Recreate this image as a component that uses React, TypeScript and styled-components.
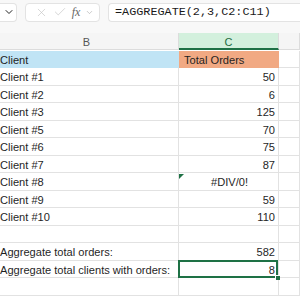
import React from 'react';
import styled, { createGlobalStyle } from 'styled-components';
import { ChevronDown, X, Check } from 'lucide-react';

const GlobalStyle = createGlobalStyle`
  body {
    margin: 0;
    font-family: "Liberation Sans", Arial, sans-serif;
    background: #ffffff;
  }
`;

const Frame = styled.div`
  width: 300px;
  height: 300px;
  overflow: hidden;
  background: #ffffff;
`;

const Toolbar = styled.div`
  display: flex;
  align-items: center;
  gap: 8px;
  height: 22px;
  padding-bottom: 11px;
  padding-top: 1px;
  background: #f8f8f8;
`;

const Box = styled.div`
  box-sizing: border-box;
  flex-shrink: 0;
  height: 19px;
  display: flex;
  align-items: center;
  background: #ffffff;
  border: 1px solid #e3e3e3;
  border-radius: 4px;
`;

const NameBox = styled(Box)`
  width: 17px;
  justify-content: center;
  padding-left: 2px;
  border-left: none;
  border-radius: 0 4px 4px 0;
  color: #222;
`;

const FxBox = styled(Box)`
  width: 75px;
  justify-content: space-around;
  padding: 0 2px 0 6px;
  color: #c4c4c4;
`;

const FormulaInput = styled(Box)`
  flex: 1 1 auto;
  min-width: 0;
  padding-left: 6px;
  border-right: none;
  border-radius: 4px 0 0 4px;
  font-family: "Liberation Mono", "DejaVu Sans Mono", monospace;
  font-size: 11.8px;
  color: #1a1a1a;
  white-space: nowrap;
  overflow: hidden;
`;

const FxLabel = styled.span`
  font-family: "Liberation Serif", serif;
  font-style: italic;
  font-size: 12px;
  color: #666;
`;

const Sheet = styled.div`
  display: grid;
  grid-template-columns: 184px 100px 1fr;
  grid-auto-rows: 17.5px;
  margin-left: -5px;
  margin-top: -1px;
`;

const ColHead = styled.div<{ $active?: boolean }>`
  box-sizing: border-box;
  height: 17px;
  display: flex;
  align-items: center;
  justify-content: center;
  padding-top: 2px;
  font-size: 11px;
  color: ${p => (p.$active ? '#1e6b3f' : '#555')};
  background: ${p => (p.$active ? '#d3f0dd' : '#f5f5f5')};
  border-right: 1px solid #dcdcdc;
  border-bottom: ${p => (p.$active ? '2px solid #1e7145' : '1px solid #dcdcdc')};
  margin-bottom: 0.5px;
`;

const Cell = styled.div<{ $fill?: string; $align?: 'left' | 'right' | 'center'; $selected?: boolean; $flag?: boolean }>`
  position: relative;
  box-sizing: border-box;
  display: flex;
  align-items: center;
  justify-content: ${p => (p.$align === 'right' ? 'flex-end' : p.$align === 'center' ? 'center' : 'flex-start')};
  padding: 2px 3px 0 5px;
  font-size: 11.1px;
  color: #1f1f1f;
  white-space: nowrap;
  background: ${p => p.$fill ?? '#ffffff'};
  border-right: 1px solid ${p => p.$fill ?? '#e2e2e2'};
  border-bottom: 1px solid ${p => p.$fill ?? '#e2e2e2'};
  overflow: visible;

  ${p => p.$flag && `
    &::before {
      content: '';
      position: absolute;
      left: 0;
      top: 1px;
      border-top: 5px solid #1e7145;
      border-right: 5px solid transparent;
    }
  `}

  ${p => p.$selected && `
    &::after {
      content: '';
      position: absolute;
      inset: -1px 0 -1px -1px;
      border: 2px solid #1e7145;
    }
    &::before {
      content: '';
      position: absolute;
      right: -2px;
      bottom: -3px;
      width: 4px;
      height: 4px;
      background: #1e7145;
      border: 1px solid #ffffff;
      border-width: 1px 0 0 1px;
      z-index: 1;
    }
  `}
`;

const rows: Array<[string, string]> = [
  ['Client #1', '50'],
  ['Client #2', '6'],
  ['Client #3', '125'],
  ['Client #5', '70'],
  ['Client #6', '75'],
  ['Client #7', '87'],
  ['Client #8', '#DIV/0!'],
  ['Client #9', '59'],
  ['Client #10', '110']
];

export default function App () {
  return (
    <Frame>
      <GlobalStyle />
      <Toolbar>
        <NameBox>
          <ChevronDown size={12} strokeWidth={2} color='#222' />
        </NameBox>
        <FxBox>
          <X size={13} strokeWidth={1.2} />
          <Check size={14} strokeWidth={1.2} />
          <FxLabel>fx</FxLabel>
          <ChevronDown size={9} strokeWidth={1.6} color='#aaa' />
        </FxBox>
        <FormulaInput>=AGGREGATE(2,3,C2:C11)</FormulaInput>
      </Toolbar>
      <Sheet>
        <ColHead>B</ColHead>
        <ColHead $active>C</ColHead>
        <ColHead />

        <Cell $fill='#c0e4f5'>Client</Cell>
        <Cell $fill='#f1a983'>Total Orders</Cell>
        <Cell />

        {rows.map(([name, value]) => (
          <React.Fragment key={name}>
            <Cell>{name}</Cell>
            <Cell $align={value.startsWith('#') ? 'center' : 'right'} $flag={value.startsWith('#')}>{value}</Cell>
            <Cell />
          </React.Fragment>
        ))}

        <Cell />
        <Cell />
        <Cell />

        <Cell>Aggregate total orders:</Cell>
        <Cell $align='right'>582</Cell>
        <Cell />

        <Cell>Aggregate total clients with orders:</Cell>
        <Cell $align='right' $selected>8</Cell>
        <Cell />

        <Cell />
        <Cell />
        <Cell />
      </Sheet>
    </Frame>
  );
}
